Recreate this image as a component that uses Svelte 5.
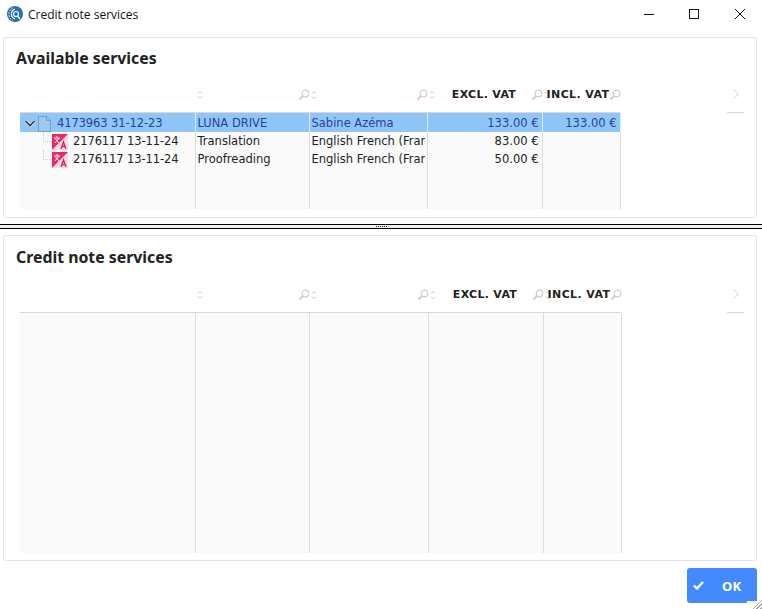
<script>
  const services = [
    { id: "2176117 13-11-24", task: "Translation", lang: "English French (France)", excl: "83.00 €" },
    { id: "2176117 13-11-24", task: "Proofreading", lang: "English French (France)", excl: "50.00 €" },
  ];
</script>

{#snippet sortIcon()}
  <svg class="sort" width="6" height="10" viewBox="0 0 6 10" fill="none" stroke="#c4c4c4" stroke-width="1">
    <path d="M1 3.5 3 1.5 5 3.5M1 6.5 3 8.5 5 6.5" />
  </svg>
{/snippet}

{#snippet searchIcon()}
  <svg class="search" width="12" height="12" viewBox="0 0 12 12" fill="none" stroke="#cfcfcf">
    <circle cx="7.5" cy="4.5" r="3.3" stroke-width="1.2" />
    <path d="M5 7 1.5 10.5" stroke-width="2" />
  </svg>
{/snippet}

{#snippet gridHead(wide)}
  <div class="head-row">
    <div class="head" class:wide>
      <div class="hcell first"></div>
      <div class="hcell">{@render sortIcon()}{@render searchIcon()}</div>
      <div class="hcell">{@render sortIcon()}{@render searchIcon()}</div>
      <div class="hcell">{@render sortIcon()}<span class="hlabel">EXCL. VAT</span>{@render searchIcon()}</div>
      <div class="hcell">{@render sortIcon()}<span class="hlabel tight">INCL. VAT</span>{@render searchIcon()}</div>
    </div>
    <div class="pager">
      <svg width="8" height="12" viewBox="0 0 8 12" fill="none" stroke="#d2d2d2"><path d="M1.5 1 6.5 6 1.5 11" /></svg>
    </div>
  </div>
{/snippet}

<div class="window">
  <header class="titlebar">
    <svg class="logo" width="16" height="16" viewBox="0 0 16 16" fill="none">
      <circle cx="8" cy="8" r="8" fill="#2a6cae" />
      <path d="M6 1.6A7 7 0 0 0 6 14.4" stroke="#cfe0f0" stroke-width="1" stroke-dasharray="2 1" />
      <path d="M8 3.2A5 5 0 0 0 8 12.8" stroke="#fff" stroke-width="1.2" />
      <circle cx="9" cy="8" r="2.5" stroke="#fff" stroke-width="1.2" />
      <path d="M10.5 10 13 13" stroke="#fff" stroke-width="1.3" />
    </svg>
    <span class="wintitle">Credit note services</span>
    <div class="winbtns">
      <svg width="10" height="10" viewBox="0 0 10 10"><path d="M0 5.5H10" stroke="#111" /></svg>
      <svg width="10" height="10" viewBox="0 0 10 10" fill="none"><rect x=".5" y=".5" width="9" height="9" stroke="#111" /></svg>
      <svg width="10" height="10" viewBox="0 0 10 10" fill="none"><path d="M0 0 10 10M10 0 0 10" stroke="#111" /></svg>
    </div>
  </header>

  <section class="panel top">
    <h2>Available services</h2>
    {@render gridHead(false)}
    <div class="body">
      <table>
        <colgroup><col class="c1" /><col class="c2" /><col class="c3" /><col class="c4" /><col class="c5" /></colgroup>
        <tbody>
          <tr class="selected">
            <td>
              <div class="tree">
                <svg class="chev" width="12" height="9" viewBox="0 0 12 9" fill="none" stroke-width="1.6">
                  <path d="M1.5 2 6 6.5 10.5 2" stroke="#e8f3fd" stroke-width="3" />
                  <path d="M1.5 2 6 6.5 10.5 2" stroke="#333" />
                </svg>
                <svg class="doc" width="13" height="16" viewBox="0 0 13 16" fill="#9ec9ee" stroke="#6aa5cc"><path d="M.5.5H8.5L12.5 4.5V15.5H.5ZM8.5.5V4.5H12.5" /></svg>
                <span class="tight-id">4173963 31-12-23</span>
              </div>
            </td>
            <td>LUNA DRIVE</td>
            <td>Sabine Azéma</td>
            <td class="num">133.00 €</td>
            <td class="num">133.00 €</td>
          </tr>
          {#each services as s}
            <tr>
              <td>
                <div class="tree child">
                  <span class="branch"></span>
                  <svg class="tr-icon" width="16" height="16" viewBox="0 0 16 16">
                    <rect width="16" height="16" fill="#ee2a63" />
                    <path d="M16 0V16H0Z" fill="#fbdbe5" />
                    <path d="M2 4H8M5 2V4M3 9 7 4M3.5 5 7 9" stroke="#fff" fill="none" />
                    <path d="M9 15 11.5 8 14 15M10 12.5H13" stroke="#d81f55" stroke-width="1.3" fill="none" />
                  </svg>
                  <span class="tight-id">{s.id}</span>
                </div>
              </td>
              <td>{s.task}</td>
              <td><div class="clip">{s.lang}</div></td>
              <td class="num">{s.excl}</td>
              <td></td>
            </tr>
          {/each}
          <tr class="filler"><td></td><td></td><td></td><td></td><td></td></tr>
        </tbody>
      </table>
    </div>
  </section>

  <div class="splitter"><span class="grip"></span></div>

  <section class="panel bottom">
    <h2>Credit note services</h2>
    {@render gridHead(true)}
    <div class="body tall">
      <table class="wide">
        <colgroup><col class="c1" /><col class="c2" /><col class="c3w" /><col class="c4" /><col class="c5" /></colgroup>
        <tbody>
          <tr class="filler"><td></td><td></td><td></td><td></td><td></td></tr>
        </tbody>
      </table>
    </div>
  </section>

  <footer class="footer">
    <button type="button" class="ok">
      <svg width="11" height="9" viewBox="0 0 11 9" fill="none" stroke="#fff" stroke-width="2.4"><path d="M1 4.5 4 7.5 10 1" /></svg>
      <span>OK</span>
    </button>
  </footer>
  <div class="resize"></div>
</div>

<style>
  :global(body) {
    margin: 0;
    background: #fff;
  }

  .window {
    position: relative;
    width: 762px;
    height: 609px;
    overflow: hidden;
    font-family: "DejaVu Sans", sans-serif;
    font-size: 11.5px;
    color: #222;
    background: #fff;
  }

  .titlebar {
    display: flex;
    align-items: center;
    height: 28px;
    padding-left: 7px;
  }

  .wintitle {
    margin-left: 5px;
    font-family: "Open Sans", sans-serif;
    font-size: 12px;
    color: #111;
  }

  .winbtns {
    display: flex;
    margin: -1px 17px 0 auto;
  }

  .winbtns svg + svg {
    margin-left: 35px;
  }

  .winbtns svg:last-child {
    margin-left: 36px;
  }

  .panel {
    box-sizing: border-box;
    margin: 0 5px 0 3px;
    border: 1px solid #e3e3e3;
    border-radius: 3px;
    padding: 0 16px;
  }

  .panel.top {
    height: 181px;
    margin-top: 9px;
  }

  .panel.bottom {
    height: 326px;
    margin-top: 6px;
  }

  h2 {
    height: 29px;
    margin: 0 0 0 -4px;
    padding-top: 9px;
    font-family: "Noto Sans", sans-serif;
    font-size: 15.85px;
    line-height: 23px;
    font-weight: 700;
    color: #222;
  }

  .bottom h2 {
    height: 30px;
    padding-top: 10px;
  }

  .head-row {
    display: flex;
    height: 36px;
    box-sizing: border-box;
    padding-top: 4px;
  }

  .head {
    display: grid;
    grid-template-columns: 175px 114px 118px 115px 78px;
    width: 600px;
    height: 29px;
  }

  .head.wide {
    grid-template-columns: 175px 114px 119px 115px 78px;
    width: 601px;
  }

  .hcell {
    display: flex;
    align-items: center;
    justify-content: space-between;
    padding: 0 0 0 1px;
    min-width: 0;
    height: 29px;
  }

  .hlabel {
    margin-left: 2px;
    font-size: 11px;
    font-weight: 700;
    letter-spacing: 0.3px;
    color: #222;
  }

  .hlabel.tight {
    margin: 0 -4px 0 -7px;
    letter-spacing: 0.4px;
  }

  .sort {
    margin-left: 1px;
  }

  .search {
    margin-right: -1px;
  }

  .pager {
    display: flex;
    align-items: center;
    justify-content: center;
    box-sizing: border-box;
    flex: none;
    width: 17px;
    height: calc(100% + 5px);
    margin: -4px 0 -1px 107px;
    padding-bottom: 1px;
    border-bottom: 1px solid #d8d8d8;
  }

  .head.wide + .pager {
    margin-left: 106px;
  }

  .body {
    height: 97px;
    width: 600px;
    box-sizing: border-box;
    border-top: 1px solid #d8d8d8;
  }

  .body.tall {
    height: 241px;
    width: 601px;
  }

  table {
    width: 600px;
    height: 96px;
    table-layout: fixed;
    border-collapse: collapse;
    background: #fafafa;
  }

  table.wide {
    width: 601px;
    height: 240px;
  }

  .c1 { width: 175px; }
  .c2 { width: 114px; }
  .c3 { width: 118px; }
  .c3w { width: 119px; }
  .c4 { width: 115px; }
  .c5 { width: 78px; }

  td {
    height: 17px;
    padding: 1px 1px 0 2px;
    border-right: 1px solid #dcdcdc;
    white-space: nowrap;
    overflow: hidden;
    line-height: 17px;
    color: #222;
  }

  tr.selected td {
    padding-top: 2px;
    background: #8fc6f7;
    color: #2b3f96;
    border-right-color: #d8ecfc;
  }

  tr.filler td {
    height: auto;
    padding: 0;
  }

  td.num {
    text-align: right;
    padding-right: 3px;
  }

  .clip {
    overflow: hidden;
    width: 113px;
  }

  .tree {
    display: flex;
    align-items: center;
    height: 17px;
    margin-left: -1px;
    padding-left: 3px;
  }

  .tight-id {
    letter-spacing: -0.1px;
  }

  .chev {
    margin-right: 2px;
  }

  .doc {
    margin-right: 6px;
  }

  .tree.child {
    padding-left: 22px;
  }

  .branch {
    width: 8px;
    height: 9px;
    margin-top: -9px;
    border-left: 1px dotted #d0d0d0;
    border-bottom: 1px dotted #d0d0d0;
  }

  .tr-icon {
    margin-right: 5px;
  }

  .splitter {
    display: flex;
    align-items: center;
    justify-content: center;
    box-sizing: border-box;
    height: 5px;
    margin-top: 6px;
    border-top: 1px solid #000;
    border-bottom: 1px solid #000;
    background: #f0f0f0;
  }

  .grip {
    width: 11px;
    height: 1px;
    background: repeating-linear-gradient(90deg, #222 0 1px, transparent 1px 2px);
  }

  .footer {
    display: flex;
    justify-content: flex-end;
    padding: 7px 5px 0 0;
  }

  .ok {
    display: flex;
    align-items: center;
    box-sizing: border-box;
    width: 70px;
    height: 35px;
    padding: 0 0 0 6px;
    border: 0;
    border-radius: 3px;
    background: #448aff;
    color: #fff;
    font-family: "Noto Sans", sans-serif;
    font-size: 13px;
    font-weight: 700;
  }

  .ok span {
    margin-left: 18px;
    letter-spacing: 0.3px;
  }

  .resize {
    position: absolute;
    right: 0;
    bottom: 0;
    width: 15px;
    height: 8px;
    background: #fff;
  }

  .resize::after {
    content: "";
    position: absolute;
    right: 0;
    bottom: 0;
    width: 12px;
    height: 12px;
    background: repeating-linear-gradient(135deg, #fff 0 1.5px, #a8a8a8 1.5px 2.8px);
    clip-path: polygon(100% 0, 100% 100%, 0 100%);
  }
</style>
